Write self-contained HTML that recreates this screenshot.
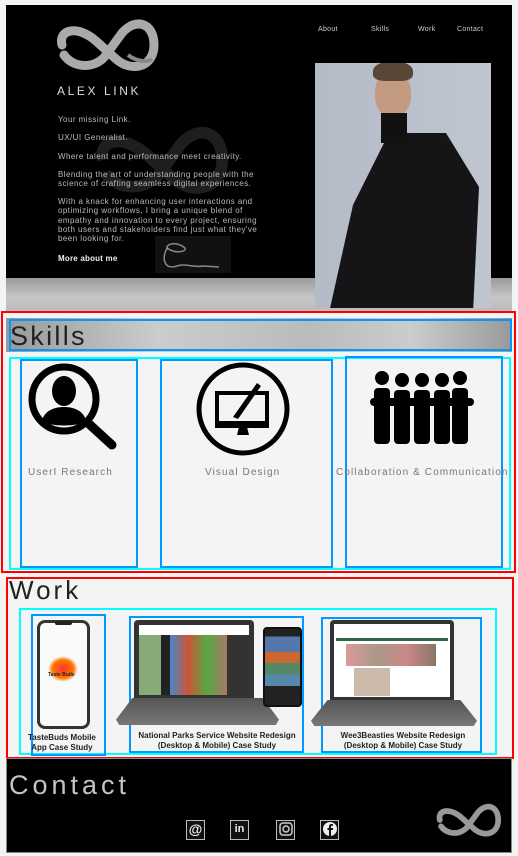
<!DOCTYPE html>
<html><head><meta charset="utf-8"><style>
*{margin:0;padding:0;box-sizing:border-box}
body{width:518px;height:856px;background:#f4f4f4;position:relative;overflow:hidden;font-family:"Liberation Sans",sans-serif}
.a{position:absolute}
.nav{color:#ccc;font-size:7px;top:26px;letter-spacing:.3px}
.t{color:#bbb;font-size:8px;left:58px;line-height:9.3px;letter-spacing:.45px;white-space:nowrap}
.lbl{color:#777;font-size:10px;top:467px;white-space:nowrap;letter-spacing:1.1px}
.cap{font-size:8px;font-weight:bold;color:#222;text-align:center;line-height:10px;white-space:nowrap}
.ic{width:19px;height:20px;border:1.5px solid #bbb;background:#111;top:820px;color:#eee;font-size:13px;text-align:center;line-height:17px;font-weight:bold}
</style></head><body>
<div class="a" style="left:6px;top:5px;width:506px;height:273px;background:#000"></div>
<div class="a" style="left:6px;top:278px;width:506px;height:33px;background:linear-gradient(180deg,#9a9a9a,#c8c8c8 60%,#bbb)"></div>
<div class="a nav" style="left:318px">About</div>
<div class="a nav" style="left:371px">Skills</div>
<div class="a nav" style="left:418px">Work</div>
<div class="a nav" style="left:457px">Contact</div>
<svg class="a" style="left:56px;top:15px" width="104" height="60" viewBox="0 0 104 60">
<path d="M6 30 C2 14 22 10 40 26 L60 44 C76 58 98 52 98 30 C98 8 80 2 66 18 L50 40 C40 54 18 54 8 40" fill="none" stroke="#aaa" stroke-width="9" stroke-linecap="round"/>
<path d="M72 40 C80 46 90 48 96 44" fill="none" stroke="#888" stroke-width="4"/>
</svg>
<div class="a" style="left:57px;top:84px;color:#ddd;font-size:12px;letter-spacing:2.6px">ALEX LINK</div>
<svg class="a" style="left:95px;top:120px;opacity:.25" width="135" height="80" viewBox="0 0 104 60"><path d="M6 30 C2 14 22 10 40 26 L60 44 C76 58 98 52 98 30 C98 8 80 2 66 18 L50 40 C40 54 18 54 8 40" fill="none" stroke="#777" stroke-width="9"/></svg>
<div class="a t" style="top:115px">Your missing Link.</div>
<div class="a t" style="top:133px">UX/UI Generalist.</div>
<div class="a t" style="top:152px">Where talent and performance meet creativity.</div>
<div class="a t" style="top:170px">Blending the art of understanding people with the<br>science of crafting seamless digital experiences.</div>
<div class="a t" style="top:197px">With a knack for enhancing user interactions and<br>optimizing workflows, I bring a unique blend of<br>empathy and innovation to every project, ensuring<br>both users and stakeholders find just what they've<br>been looking for.</div>
<div class="a" style="left:58px;top:254px;color:#eee;font-size:8px;font-weight:bold;letter-spacing:.2px">More about me</div>
<div class="a" style="left:155px;top:236px;width:76px;height:37px;background:#111"></div>
<svg class="a" style="left:155px;top:236px" width="76" height="37"><path d="M12 14 C10 6 24 6 30 12 C32 16 20 18 12 12 C6 24 10 34 22 30 C30 27 40 32 48 30 L64 31" fill="none" stroke="#888" stroke-width="1.5"/></svg>
<div class="a" style="left:315px;top:63px;width:176px;height:245px;background:linear-gradient(90deg,#b4bac6,#c0c6d0);overflow:hidden">
<div class="a" style="left:14px;top:70px;width:150px;height:180px;background:#151518;clip-path:polygon(40% 0,78% 0,100% 30%,96% 100%,0 100%,16% 40%)"></div>
<div class="a" style="left:60px;top:8px;width:36px;height:46px;border-radius:45%;background:#c49a82"></div>
<div class="a" style="left:58px;top:-2px;width:40px;height:20px;border-radius:50% 50% 30% 30%;background:#5a4636"></div>
<div class="a" style="left:66px;top:50px;width:26px;height:30px;background:#111"></div>
</div>
<div class="a" style="left:1px;top:311px;width:515px;height:262px;border:2px solid #f00"></div>
<div class="a" style="left:6px;top:318px;width:506px;height:34px;background:linear-gradient(90deg,#999,#ccc 30%,#bbb 60%,#ccc 80%,#999)"></div>
<div class="a" style="left:9px;top:319px;width:503px;height:32px;border:2px solid #09f"></div>
<div class="a" style="left:10px;top:321px;font-size:27px;color:#222;letter-spacing:2.3px">Skills</div>
<div class="a" style="left:9px;top:357px;width:502px;height:213px;border:2px solid #0ff"></div>
<div class="a" style="left:20px;top:359px;width:118px;height:209px;border:2px solid #09f"></div>
<div class="a" style="left:160px;top:359px;width:173px;height:209px;border:2px solid #09f"></div>
<div class="a" style="left:345px;top:356px;width:158px;height:212px;border:2px solid #09f"></div>
<svg class="a" style="left:26px;top:361px" width="94" height="92" viewBox="0 0 94 92">
<circle cx="38" cy="38" r="32" fill="none" stroke="#000" stroke-width="7"/>
<line x1="62" y1="62" x2="86" y2="84" stroke="#000" stroke-width="9" stroke-linecap="round"/>
<ellipse cx="38" cy="30" rx="12" ry="15" fill="#000"/>
<path d="M16 60 C18 50 28 46 38 46 C48 46 58 50 60 60 C52 66 24 66 16 60Z" fill="#000"/>
</svg>
<div class="a lbl" style="left:28px">UserI Research</div>
<svg class="a" style="left:195px;top:361px" width="96" height="96" viewBox="0 0 96 96">
<circle cx="48" cy="48" r="44" fill="none" stroke="#000" stroke-width="5"/>
<rect x="22" y="32" width="50" height="33" fill="none" stroke="#000" stroke-width="4"/>
<rect x="22" y="60" width="50" height="5" fill="#000"/>
<path d="M44 66 L42 74 L54 74 L52 66Z" fill="#000"/>
<path d="M38 56 L62 22 L66 25 L43 58 Z" fill="#000"/>
</svg>
<div class="a lbl" style="left:205px">Visual Design</div>
<svg class="a" style="left:370px;top:370px" width="104" height="76" viewBox="0 0 104 76">
<g fill="#000">
<circle cx="12" cy="8" r="7"/><circle cx="32" cy="10" r="7"/><circle cx="52" cy="10" r="7"/><circle cx="72" cy="10" r="7"/><circle cx="90" cy="8" r="7"/>
<rect x="4" y="18" width="16" height="56" rx="4"/><rect x="24" y="20" width="16" height="54" rx="4"/><rect x="44" y="20" width="16" height="54" rx="4"/><rect x="64" y="20" width="16" height="54" rx="4"/><rect x="82" y="18" width="16" height="56" rx="4"/>
<rect x="0" y="28" width="104" height="8" rx="4"/>
</g>
<g stroke="#f4f4f4" stroke-width="1.5"><line x1="22" y1="40" x2="22" y2="76"/><line x1="42" y1="40" x2="42" y2="76"/><line x1="62" y1="40" x2="62" y2="76"/><line x1="81" y1="40" x2="81" y2="76"/></g>
</svg>
<div class="a lbl" style="left:336px">Collaboration &amp; Communication</div>
<div class="a" style="left:6px;top:577px;width:508px;height:182px;border:2px solid #f00"></div>
<div class="a" style="left:9px;top:575px;font-size:26px;color:#222;letter-spacing:3px">Work</div>
<div class="a" style="left:19px;top:608px;width:478px;height:147px;border:2px solid #0ff"></div>
<div class="a" style="left:31px;top:614px;width:75px;height:142px;border:2px solid #09f"></div>
<div class="a" style="left:129px;top:616px;width:175px;height:137px;border:2px solid #09f"></div>
<div class="a" style="left:321px;top:617px;width:161px;height:136px;border:2px solid #09f"></div>
<div class="a" style="left:37px;top:620px;width:53px;height:109px;border:3px solid #333;border-radius:8px;background:#fafafa"></div>
<div class="a" style="left:55px;top:621px;width:17px;height:4px;background:#222;border-radius:2px"></div>
<div class="a" style="left:48px;top:656px;width:30px;height:26px;border-radius:50%;background:radial-gradient(#f33,#f70 50%,transparent 70%)"></div>
<div class="a" style="left:48px;top:672px;font-size:5px;color:#222;font-weight:bold">Taste Buds</div>
<div class="a cap" style="left:28px;top:733px">TasteBuds Mobile<br>App Case Study</div>
<div class="a" style="left:134px;top:620px;width:120px;height:78px;background:#333;border-radius:4px 4px 0 0"></div>
<div class="a" style="left:139px;top:625px;width:110px;height:70px;background:linear-gradient(90deg,#8a7 0,#8a7 20%,#222 20%,#222 28%,#48c 28%,#c53 45%,#5a4 62%,#a76 80%,#333 80%)"></div>
<div class="a" style="left:139px;top:625px;width:110px;height:10px;background:#fff"></div>
<div class="a" style="left:116px;top:698px;width:163px;height:27px;background:linear-gradient(#555,#777);clip-path:polygon(10% 0,90% 0,100% 80%,98% 100%,2% 100%,0 80%)"></div>
<div class="a" style="left:263px;top:627px;width:39px;height:80px;background:linear-gradient(#222 10%,#57a 10%,#57a 30%,#c63 30%,#c63 45%,#586 45%,#586 60%,#58a 60%,#58a 75%,#222 75%);border:2px solid #111;border-radius:4px"></div>
<div class="a cap" style="left:124px;top:731px;width:186px">National Parks Service Website Redesign<br>(Desktop &amp; Mobile) Case Study</div>
<div class="a" style="left:330px;top:620px;width:124px;height:80px;background:#333;border-radius:4px 4px 0 0"></div>
<div class="a" style="left:334px;top:624px;width:116px;height:73px;background:#fff"></div>
<div class="a" style="left:336px;top:638px;width:112px;height:3px;background:#364"></div>
<div class="a" style="left:346px;top:644px;width:90px;height:22px;background:linear-gradient(90deg,#d99,#a98,#c88,#876)"></div>
<div class="a" style="left:354px;top:668px;width:36px;height:28px;background:#cba"></div>
<div class="a" style="left:311px;top:700px;width:166px;height:26px;background:linear-gradient(#555,#777);clip-path:polygon(10% 0,90% 0,100% 80%,98% 100%,2% 100%,0 80%)"></div>
<div class="a cap" style="left:318px;top:731px;width:170px">Wee3Beasties Website Redesign<br>(Desktop &amp; Mobile) Case Study</div>
<div class="a" style="left:6px;top:758px;width:506px;height:95px;background:#000;border:1px solid #888"></div>
<div class="a" style="left:9px;top:770px;font-size:27px;color:#c4c4c4;letter-spacing:4px">Contact</div>
<div class="a ic" style="left:186px;font-size:14px">@</div>
<div class="a ic" style="left:230px;font-size:11px">in</div>
<div class="a ic" style="left:276px"><svg width="16" height="16" viewBox="0 0 16 16"><rect x="2" y="2" width="12" height="12" rx="3" fill="none" stroke="#ccc" stroke-width="1.5"/><circle cx="8" cy="8" r="3" fill="none" stroke="#ccc" stroke-width="1.5"/></svg></div>
<div class="a ic" style="left:320px"><svg width="16" height="16" viewBox="0 0 16 16"><circle cx="8" cy="8" r="7" fill="#eee"/><path d="M9 16 V9 H11 V7 H9 V5.5 C9 5 9.5 4.8 10 4.8 H11 V3 H9.5 C8 3 7 4 7 5.5 V7 H5.5 V9 H7 V16Z" fill="#111"/></svg></div>
<svg class="a" style="left:436px;top:800px" width="66" height="40" viewBox="0 0 104 60"><path d="M6 30 C2 14 22 10 40 26 L60 44 C76 58 98 52 98 30 C98 8 80 2 66 18 L50 40 C40 54 18 54 8 40" fill="none" stroke="#999" stroke-width="9" stroke-linecap="round"/></svg>
</body></html>
